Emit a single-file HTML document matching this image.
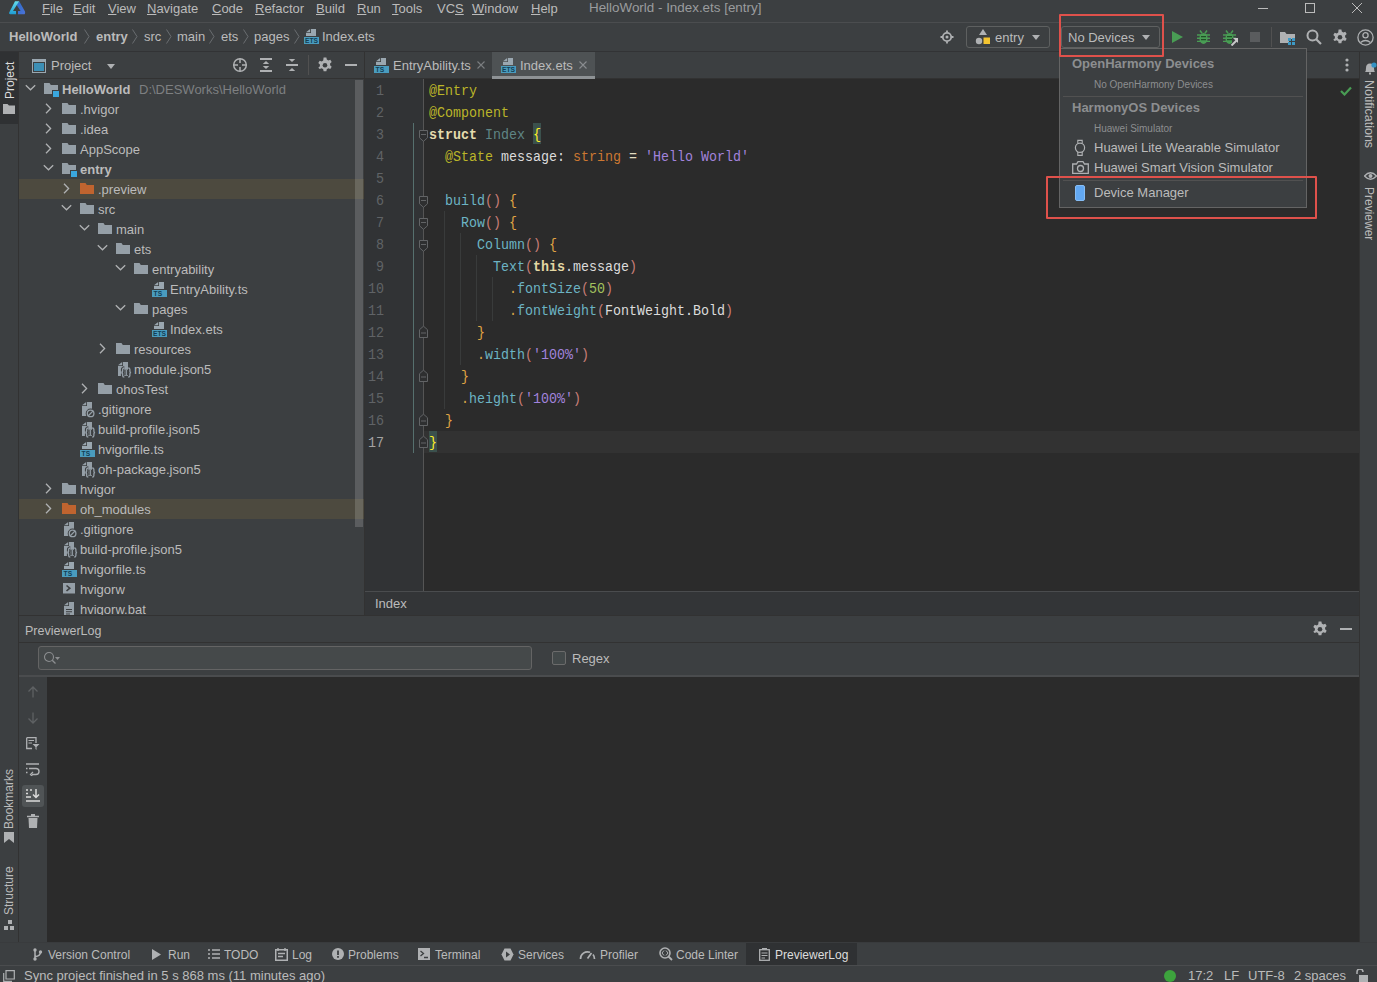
<!DOCTYPE html><html><head><meta charset="utf-8"><title>DevEco Studio</title><style>
*{margin:0;padding:0}
html,body{width:1377px;height:982px;overflow:hidden;background:#3C3F41}
body{position:relative;font-family:"Liberation Sans",sans-serif}
.b{position:absolute;display:block}
.t{position:absolute;white-space:nowrap;line-height:16px;font-family:"Liberation Sans",sans-serif}
.m{position:absolute;white-space:pre;line-height:22px;font-family:"Liberation Mono",monospace;font-size:13.33px;transform:scaleY(1.1);transform-origin:0 14px}
u{text-decoration:underline;text-underline-offset:1px}
</style></head><body><div class="b" style="left:0px;top:0px;width:1377px;height:982px;background:#3C3F41;"></div>
<div class="b" style="left:0px;top:22px;width:1377px;height:1px;background:#4B4D4F;"></div>
<div class="b" style="left:0px;top:51px;width:1377px;height:1px;background:#323335;"></div>
<svg class="b" style="left:8px;top:0px;" width="18" height="16" viewBox="0 0 18 16"><defs><linearGradient id="lgL" x1="0" y1="0" x2="0" y2="1"><stop offset="0" stop-color="#66DCEE"/><stop offset="1" stop-color="#1E9CD2"/></linearGradient><linearGradient id="lgR" x1="0" y1="0" x2="1" y2="1"><stop offset="0" stop-color="#2A6CC8"/><stop offset="1" stop-color="#4C72D8"/></linearGradient></defs><path d="M9.2 4 L11.2 1.2 L17 11.4 Q17.6 14.2 15.8 14.2 H10 V11 H12.6 L8.6 5 Z" fill="url(#lgR)"/><path d="M7 1.2 H11.2 L5 11 H8 V14.2 H2.4 Q0.5 14.2 1.2 12.4 Z" fill="url(#lgL)"/></svg>
<div class="t" style="left:42px;top:1px;font-size:13px;color:#BBBBBB;"><u>F</u>ile</div>
<div class="t" style="left:73px;top:1px;font-size:13px;color:#BBBBBB;"><u>E</u>dit</div>
<div class="t" style="left:108px;top:1px;font-size:13px;color:#BBBBBB;"><u>V</u>iew</div>
<div class="t" style="left:147px;top:1px;font-size:13px;color:#BBBBBB;"><u>N</u>avigate</div>
<div class="t" style="left:212px;top:1px;font-size:13px;color:#BBBBBB;"><u>C</u>ode</div>
<div class="t" style="left:255px;top:1px;font-size:13px;color:#BBBBBB;"><u>R</u>efactor</div>
<div class="t" style="left:316px;top:1px;font-size:13px;color:#BBBBBB;"><u>B</u>uild</div>
<div class="t" style="left:357px;top:1px;font-size:13px;color:#BBBBBB;"><u>R</u>un</div>
<div class="t" style="left:392px;top:1px;font-size:13px;color:#BBBBBB;"><u>T</u>ools</div>
<div class="t" style="left:437px;top:1px;font-size:13px;color:#BBBBBB;">VC<u>S</u></div>
<div class="t" style="left:472px;top:1px;font-size:13px;color:#BBBBBB;"><u>W</u>indow</div>
<div class="t" style="left:531px;top:1px;font-size:13px;color:#BBBBBB;"><u>H</u>elp</div>
<div class="t" style="left:589px;top:0px;font-size:13.4px;color:#9A9C9E;">HelloWorld - Index.ets [entry]</div>
<svg class="b" style="left:1258px;top:3px;" width="10" height="10" viewBox="0 0 10 10"><path d="M0 5.5 H10" stroke="#BBBBBB" stroke-width="1"/></svg>
<svg class="b" style="left:1305px;top:3px;" width="10" height="10" viewBox="0 0 10 10"><rect x="0.5" y="0.5" width="9" height="9" fill="none" stroke="#BBBBBB" stroke-width="1"/></svg>
<svg class="b" style="left:1352px;top:3px;" width="10" height="10" viewBox="0 0 10 10"><path d="M0 0 L10 10 M10 0 L0 10" stroke="#BBBBBB" stroke-width="1"/></svg>
<div class="t" style="left:9px;top:29px;font-size:13px;color:#BBBBBB;font-weight:bold;">HelloWorld</div>
<svg class="b" style="left:84px;top:29px;" width="6" height="15" viewBox="0 0 6 15"><path d="M0.5 0.5 L5 7.5 L0.5 14.5" fill="none" stroke="#6A6D70" stroke-width="1"/></svg>
<div class="t" style="left:96px;top:29px;font-size:13px;color:#BBBBBB;font-weight:bold;">entry</div>
<svg class="b" style="left:132px;top:29px;" width="6" height="15" viewBox="0 0 6 15"><path d="M0.5 0.5 L5 7.5 L0.5 14.5" fill="none" stroke="#6A6D70" stroke-width="1"/></svg>
<div class="t" style="left:144px;top:29px;font-size:13px;color:#BBBBBB;">src</div>
<svg class="b" style="left:166px;top:29px;" width="6" height="15" viewBox="0 0 6 15"><path d="M0.5 0.5 L5 7.5 L0.5 14.5" fill="none" stroke="#6A6D70" stroke-width="1"/></svg>
<div class="t" style="left:177px;top:29px;font-size:13px;color:#BBBBBB;">main</div>
<svg class="b" style="left:209px;top:29px;" width="6" height="15" viewBox="0 0 6 15"><path d="M0.5 0.5 L5 7.5 L0.5 14.5" fill="none" stroke="#6A6D70" stroke-width="1"/></svg>
<div class="t" style="left:221px;top:29px;font-size:13px;color:#BBBBBB;">ets</div>
<svg class="b" style="left:243px;top:29px;" width="6" height="15" viewBox="0 0 6 15"><path d="M0.5 0.5 L5 7.5 L0.5 14.5" fill="none" stroke="#6A6D70" stroke-width="1"/></svg>
<div class="t" style="left:254px;top:29px;font-size:13px;color:#BBBBBB;">pages</div>
<svg class="b" style="left:294px;top:29px;" width="6" height="15" viewBox="0 0 6 15"><path d="M0.5 0.5 L5 7.5 L0.5 14.5" fill="none" stroke="#6A6D70" stroke-width="1"/></svg>
<svg class="b" style="left:304px;top:29px;" width="16" height="16" viewBox="0 0 16 16"><path d="M7 0 H12 V7 H2 V4 H7 Z" fill="#9AA7B0"/><path d="M2 3.2 L6.2 0 V3.2 Z" fill="#9AA7B0"/><rect x="0" y="8" width="15" height="7" fill="#4A9CBE"/><text x="1" y="14.4" font-family="Liberation Sans" font-size="7.6" font-weight="bold" fill="#123E55" textLength="13" lengthAdjust="spacingAndGlyphs">ETS</text></svg>
<div class="t" style="left:322px;top:29px;font-size:13px;color:#BBBBBB;">Index.ets</div>
<svg class="b" style="left:940px;top:30px;" width="14" height="14" viewBox="0 0 14 14"><circle cx="7" cy="7" r="4.2" fill="none" stroke="#AFB1B3" stroke-width="1.8"/><circle cx="7" cy="7" r="1.5" fill="#AFB1B3"/><path d="M7 0.5 V2.5 M7 11.5 V13.5 M0.5 7 H2.5 M11.5 7 H13.5" stroke="#AFB1B3" stroke-width="1.8"/></svg>
<div class="b" style="left:966px;top:26px;width:84px;height:22px;border:1px solid #5E6060;border-radius:3px;box-sizing:border-box"></div>
<svg class="b" style="left:975px;top:29px;" width="16" height="16" viewBox="0 0 16 16"><path d="M8 0 L12 6 H4 Z" fill="#AFB1B3"/><circle cx="4" cy="12" r="3.2" fill="#AFB1B3"/><rect x="8.5" y="8.5" width="6.5" height="6.5" fill="#F4C430"/></svg>
<div class="t" style="left:995px;top:30px;font-size:13px;color:#BBBBBB;">entry</div>
<svg class="b" style="left:1032px;top:35px;" width="8" height="5" viewBox="0 0 8 5"><path d="M0 0 H8 L4 5 Z" fill="#AFB1B3"/></svg>
<div class="b" style="left:1061px;top:26px;width:99px;height:22px;border:1px solid #5E6060;border-radius:3px;box-sizing:border-box"></div>
<div class="t" style="left:1068px;top:30px;font-size:13px;color:#BBBBBB;">No Devices</div>
<svg class="b" style="left:1142px;top:35px;" width="8" height="5" viewBox="0 0 8 5"><path d="M0 0 H8 L4 5 Z" fill="#AFB1B3"/></svg>
<svg class="b" style="left:1172px;top:31px;" width="11" height="12" viewBox="0 0 11 12"><path d="M0 0 L11 6 L0 12 Z" fill="#499C54"/></svg>
<svg class="b" style="left:1197px;top:30px;" width="13" height="14" viewBox="0 0 13 14"><path d="M3 0.5 L5 3.2 M10 0.5 L8 3.2" stroke="#499C54" stroke-width="1.5"/><ellipse cx="6.5" cy="8.4" rx="4.1" ry="5.5" fill="#499C54"/><path d="M0 5 H13 M0 8.2 H13 M0 11.4 H13" stroke="#499C54" stroke-width="1.4"/><path d="M4 6.6 H9 M4 9.7 H9" stroke="#1F4F26" stroke-width="1.2"/></svg>
<svg class="b" style="left:1223px;top:30px;" width="16" height="16" viewBox="0 0 16 16"><path d="M3 0.5 L5 3.2 M10 0.5 L8 3.2" stroke="#499C54" stroke-width="1.5"/><ellipse cx="6.5" cy="8.4" rx="4.1" ry="5.5" fill="#499C54"/><path d="M0 5 H13 M0 8.2 H13 M0 11.4 H13" stroke="#499C54" stroke-width="1.4"/><path d="M4 6.6 H9 M4 9.7 H9" stroke="#1F4F26" stroke-width="1.2"/><path d="M9 8 H16 V16 H9 Z" fill="#3C3F41"/><path d="M8.5 15.5 L13.5 10.5" stroke="#C8C8C8" stroke-width="2"/><path d="M10 8 H15 V13 Z" fill="#C8C8C8"/></svg>
<div class="b" style="left:1250px;top:32px;width:10px;height:10px;background:#5A5C5E;"></div>
<div class="b" style="left:1271px;top:27px;width:1px;height:20px;background:#515151;"></div>
<svg class="b" style="left:1280px;top:29px;" width="16" height="16" viewBox="0 0 16 16"><path d="M0 3 H5 L6.5 5 H15 V10 H9 V14 H0 Z" fill="#AFB1B3"/><rect x="8" y="9" width="3" height="3" fill="#3D9AC6"/><rect x="12" y="9" width="3" height="3" fill="#3D9AC6"/><rect x="8" y="13" width="3" height="3" fill="#3D9AC6"/><rect x="12" y="13" width="3" height="3" fill="#3D9AC6"/></svg>
<svg class="b" style="left:1306px;top:29px;" width="16" height="16" viewBox="0 0 16 16"><circle cx="6.5" cy="6.5" r="5" fill="none" stroke="#AFB1B3" stroke-width="2"/><path d="M10 10 L15 15" stroke="#AFB1B3" stroke-width="2.2"/></svg>
<svg class="b" style="left:1332px;top:29px;" width="16" height="16" viewBox="0 0 16 16"><path fill="#AFB1B3" d="M6.6 0.5h2.8l0.4 2.1 1.5 0.9 2-0.8 1.4 2.4-1.6 1.4v1.8l1.6 1.4-1.4 2.4-2-0.8-1.5 0.9-0.4 2.1H6.6l-0.4-2.1-1.5-0.9-2 0.8L1.3 10.7l1.6-1.4V7.5L1.3 6.1 2.7 3.7l2 0.8 1.5-0.9z"/><circle cx="8" cy="8.2" r="2.3" fill="#3C3F41"/></svg>
<svg class="b" style="left:1357px;top:29px;" width="17" height="17" viewBox="0 0 17 17"><circle cx="8.5" cy="8.5" r="7.6" fill="none" stroke="#AFB1B3" stroke-width="1.3"/><circle cx="8.5" cy="6.3" r="2.6" fill="none" stroke="#AFB1B3" stroke-width="1.3"/><path d="M3.5 13.5 Q8.5 9.5 13.5 13.5" fill="none" stroke="#AFB1B3" stroke-width="1.3"/></svg>
<div class="b" style="left:0px;top:52px;width:18px;height:890px;background:#3C3F41;"></div>
<div class="b" style="left:18px;top:52px;width:1px;height:890px;background:#323232;"></div>
<div class="b" style="left:0px;top:52px;width:18px;height:72px;background:#2F3133;"></div>
<div class="t" style="left:1.5px;top:98.5px;font-size:12px;color:#DDDDDD;transform-origin:0 0;transform:rotate(-90deg)">Project</div>
<svg class="b" style="left:3px;top:104px;" width="12" height="10" viewBox="0 0 12 10"><path d="M0 0 H4.5 L6 1.6 H12 V10 H0 Z" fill="#AFB1B3"/></svg>
<div class="t" style="left:1px;top:829px;font-size:12px;color:#BBBBBB;transform-origin:0 0;transform:rotate(-90deg)">Bookmarks</div>
<svg class="b" style="left:4px;top:832px;" width="10" height="11" viewBox="0 0 10 11"><path d="M0 0 H10 V11 L5 7 L0 11 Z" fill="#AFB1B3"/></svg>
<div class="t" style="left:1px;top:915px;font-size:12px;color:#BBBBBB;transform-origin:0 0;transform:rotate(-90deg)">Structure</div>
<svg class="b" style="left:4px;top:920px;" width="10" height="10" viewBox="0 0 10 10"><rect x="4" y="0" width="4" height="4" fill="#AFB1B3"/><rect x="0" y="6" width="4" height="4" fill="#AFB1B3"/><rect x="6" y="6" width="4" height="4" fill="#AFB1B3"/></svg>
<div class="b" style="left:1359px;top:52px;width:1px;height:890px;background:#323232;"></div>
<div class="b" style="left:1360px;top:52px;width:17px;height:890px;background:#3C3F41;"></div>
<svg class="b" style="left:1364px;top:62px;" width="13" height="13" viewBox="0 0 13 13"><path d="M1 10 Q2 9 2 6 Q2 1.5 6 1.5 Q10 1.5 10 6 Q10 9 11 10 Z" fill="#AFB1B3"/><rect x="5" y="10.5" width="2" height="2" fill="#AFB1B3"/><circle cx="10" cy="3" r="2.6" fill="#3592C4"/></svg>
<div class="t" style="left:1376.5px;top:80px;font-size:12.5px;color:#BBBBBB;transform-origin:0 0;transform:rotate(90deg)">Notifications</div>
<svg class="b" style="left:1364px;top:171px;" width="13" height="10" viewBox="0 0 13 10"><path d="M0.5 5 Q6.5 -1.5 12.5 5 Q6.5 11.5 0.5 5 Z" fill="none" stroke="#AFB1B3" stroke-width="1.3"/><circle cx="6.5" cy="5" r="2" fill="#AFB1B3"/></svg>
<div class="t" style="left:1376.5px;top:187px;font-size:12px;color:#BBBBBB;transform-origin:0 0;transform:rotate(90deg)">Previewer</div>
<div class="b" style="left:19px;top:52px;width:345px;height:26px;background:#3C3F41;"></div>
<svg class="b" style="left:32px;top:59px;" width="14" height="14" viewBox="0 0 14 14"><rect x="0.5" y="0.5" width="13" height="13" fill="none" stroke="#9AA7B0" stroke-width="1"/><rect x="0" y="0" width="14" height="3" fill="#9AA7B0"/><rect x="2" y="4" width="10" height="8" fill="#3D8FB5"/></svg>
<div class="t" style="left:51px;top:58px;font-size:13px;color:#BBBBBB;">Project</div>
<svg class="b" style="left:107px;top:64px;" width="8" height="5" viewBox="0 0 8 5"><path d="M0 0 H8 L4 5 Z" fill="#AFB1B3"/></svg>
<div class="b" style="left:19px;top:78px;width:345px;height:1px;background:#323232;"></div>
<svg class="b" style="left:232px;top:57px;" width="16" height="16" viewBox="0 0 16 16"><circle cx="8" cy="8" r="6.3" fill="none" stroke="#AFB1B3" stroke-width="1.5"/><path d="M8 1.5 V6 M8 10 V14.5 M1.5 8 H6 M10 8 H14.5" stroke="#AFB1B3" stroke-width="1.5"/></svg>
<svg class="b" style="left:260px;top:58px;" width="12" height="14" viewBox="0 0 12 14"><rect x="0" y="0" width="12" height="2" fill="#AFB1B3"/><path d="M2.8 6 L6 3 L9.2 6 Z M2.8 8 L6 11 L9.2 8 Z" fill="#AFB1B3"/><rect x="0" y="12" width="12" height="2" fill="#AFB1B3"/></svg>
<svg class="b" style="left:286px;top:58px;" width="12" height="14" viewBox="0 0 12 14"><path d="M2.8 1 H9.2 L6 4 Z M2.8 13 H9.2 L6 10 Z" fill="#AFB1B3"/><rect x="0" y="6" width="12" height="2" fill="#AFB1B3"/></svg>
<div class="b" style="left:308px;top:55px;width:1px;height:20px;background:#515151;"></div>
<svg class="b" style="left:317px;top:57px;" width="16" height="16" viewBox="0 0 16 16"><path fill="#AFB1B3" d="M6.6 0.5h2.8l0.4 2.1 1.5 0.9 2-0.8 1.4 2.4-1.6 1.4v1.8l1.6 1.4-1.4 2.4-2-0.8-1.5 0.9-0.4 2.1H6.6l-0.4-2.1-1.5-0.9-2 0.8L1.3 10.7l1.6-1.4V7.5L1.3 6.1 2.7 3.7l2 0.8 1.5-0.9z"/><circle cx="8" cy="8.2" r="2.3" fill="#3C3F41"/></svg>
<div class="b" style="left:345px;top:64px;width:12px;height:2px;background:#AFB1B3;"></div>
<div class="b" style="left:19px;top:79px;width:345px;height:536px;background:#3C3F41;"></div>
<div class="b" style="left:19px;top:79px;width:345px;height:536px;overflow:hidden">
<svg class="b" style="left:6px;top:5px" width="11" height="8" viewBox="0 0 11 8"><path d="M0.8 1.2 L5.5 5.8 L10.2 1.2" fill="none" stroke="#AFB1B3" stroke-width="1.3"/></svg><svg class="b" style="left:25px;top:4px" width="16" height="15" viewBox="0 0 16 15"><path d="M0 0 H5.5 L6.8 2 H14 V11 H0 Z" fill="#959FA7"/><rect x="8" y="7" width="8" height="8" fill="#3C3F41"/><rect x="9" y="8" width="6" height="6" fill="#3AA7DE"/></svg><div class="t" style="left:43px;top:3px;font-size:13px;color:#BBBBBB;font-weight:bold;">HelloWorld</div><div class="t" style="left:120px;top:3px;font-size:13px;color:#7E8082">D:\DESWorks\HelloWorld</div><svg class="b" style="left:26px;top:24px" width="7" height="11" viewBox="0 0 7 11"><path d="M1 0.8 L5.6 5.5 L1 10.2" fill="none" stroke="#AFB1B3" stroke-width="1.3"/></svg><svg class="b" style="left:43px;top:24px" width="16" height="15" viewBox="0 0 16 15"><path d="M0 0 H5.5 L6.8 2 H14 V11 H0 Z" fill="#959FA7"/></svg><div class="t" style="left:61px;top:23px;font-size:13px;color:#BBBBBB;">.hvigor</div><svg class="b" style="left:26px;top:44px" width="7" height="11" viewBox="0 0 7 11"><path d="M1 0.8 L5.6 5.5 L1 10.2" fill="none" stroke="#AFB1B3" stroke-width="1.3"/></svg><svg class="b" style="left:43px;top:44px" width="16" height="15" viewBox="0 0 16 15"><path d="M0 0 H5.5 L6.8 2 H14 V11 H0 Z" fill="#959FA7"/></svg><div class="t" style="left:61px;top:43px;font-size:13px;color:#BBBBBB;">.idea</div><svg class="b" style="left:26px;top:64px" width="7" height="11" viewBox="0 0 7 11"><path d="M1 0.8 L5.6 5.5 L1 10.2" fill="none" stroke="#AFB1B3" stroke-width="1.3"/></svg><svg class="b" style="left:43px;top:64px" width="16" height="15" viewBox="0 0 16 15"><path d="M0 0 H5.5 L6.8 2 H14 V11 H0 Z" fill="#959FA7"/></svg><div class="t" style="left:61px;top:63px;font-size:13px;color:#BBBBBB;">AppScope</div><svg class="b" style="left:24px;top:85px" width="11" height="8" viewBox="0 0 11 8"><path d="M0.8 1.2 L5.5 5.8 L10.2 1.2" fill="none" stroke="#AFB1B3" stroke-width="1.3"/></svg><svg class="b" style="left:43px;top:84px" width="16" height="15" viewBox="0 0 16 15"><path d="M0 0 H5.5 L6.8 2 H14 V11 H0 Z" fill="#959FA7"/><rect x="8" y="7" width="8" height="8" fill="#3C3F41"/><rect x="9" y="8" width="6" height="6" fill="#3AA7DE"/></svg><div class="t" style="left:61px;top:83px;font-size:13px;color:#BBBBBB;font-weight:bold;">entry</div><div class="b" style="left:0;top:100px;width:345px;height:20px;background:#4D4A3F"></div><svg class="b" style="left:44px;top:104px" width="7" height="11" viewBox="0 0 7 11"><path d="M1 0.8 L5.6 5.5 L1 10.2" fill="none" stroke="#AFB1B3" stroke-width="1.3"/></svg><svg class="b" style="left:61px;top:104px" width="16" height="15" viewBox="0 0 16 15"><path d="M0 0 H5.5 L6.8 2 H14 V11 H0 Z" fill="#C0642F"/></svg><div class="t" style="left:79px;top:103px;font-size:13px;color:#BBBBBB;">.preview</div><svg class="b" style="left:42px;top:125px" width="11" height="8" viewBox="0 0 11 8"><path d="M0.8 1.2 L5.5 5.8 L10.2 1.2" fill="none" stroke="#AFB1B3" stroke-width="1.3"/></svg><svg class="b" style="left:61px;top:124px" width="16" height="15" viewBox="0 0 16 15"><path d="M0 0 H5.5 L6.8 2 H14 V11 H0 Z" fill="#959FA7"/></svg><div class="t" style="left:79px;top:123px;font-size:13px;color:#BBBBBB;">src</div><svg class="b" style="left:60px;top:145px" width="11" height="8" viewBox="0 0 11 8"><path d="M0.8 1.2 L5.5 5.8 L10.2 1.2" fill="none" stroke="#AFB1B3" stroke-width="1.3"/></svg><svg class="b" style="left:79px;top:144px" width="16" height="15" viewBox="0 0 16 15"><path d="M0 0 H5.5 L6.8 2 H14 V11 H0 Z" fill="#959FA7"/></svg><div class="t" style="left:97px;top:143px;font-size:13px;color:#BBBBBB;">main</div><svg class="b" style="left:78px;top:165px" width="11" height="8" viewBox="0 0 11 8"><path d="M0.8 1.2 L5.5 5.8 L10.2 1.2" fill="none" stroke="#AFB1B3" stroke-width="1.3"/></svg><svg class="b" style="left:97px;top:164px" width="16" height="15" viewBox="0 0 16 15"><path d="M0 0 H5.5 L6.8 2 H14 V11 H0 Z" fill="#959FA7"/></svg><div class="t" style="left:115px;top:163px;font-size:13px;color:#BBBBBB;">ets</div><svg class="b" style="left:96px;top:185px" width="11" height="8" viewBox="0 0 11 8"><path d="M0.8 1.2 L5.5 5.8 L10.2 1.2" fill="none" stroke="#AFB1B3" stroke-width="1.3"/></svg><svg class="b" style="left:115px;top:184px" width="16" height="15" viewBox="0 0 16 15"><path d="M0 0 H5.5 L6.8 2 H14 V11 H0 Z" fill="#959FA7"/></svg><div class="t" style="left:133px;top:183px;font-size:13px;color:#BBBBBB;">entryability</div><svg class="b" style="left:133px;top:203px" width="16" height="16" viewBox="0 0 16 16"><path d="M7 0 H12 V7 H2 V4 H7 Z" fill="#9AA7B0"/><path d="M2 3.2 L6.2 0 V3.2 Z" fill="#9AA7B0"/><rect x="0" y="8" width="15" height="7" fill="#4A9CBE"/><text x="1.6" y="14.4" font-family="Liberation Sans" font-size="7.6" font-weight="bold" fill="#123E55" textLength="8.5" lengthAdjust="spacingAndGlyphs">TS</text></svg><div class="t" style="left:151px;top:203px;font-size:13px;color:#BBBBBB;">EntryAbility.ts</div><svg class="b" style="left:96px;top:225px" width="11" height="8" viewBox="0 0 11 8"><path d="M0.8 1.2 L5.5 5.8 L10.2 1.2" fill="none" stroke="#AFB1B3" stroke-width="1.3"/></svg><svg class="b" style="left:115px;top:224px" width="16" height="15" viewBox="0 0 16 15"><path d="M0 0 H5.5 L6.8 2 H14 V11 H0 Z" fill="#959FA7"/></svg><div class="t" style="left:133px;top:223px;font-size:13px;color:#BBBBBB;">pages</div><svg class="b" style="left:133px;top:243px" width="16" height="16" viewBox="0 0 16 16"><path d="M7 0 H12 V7 H2 V4 H7 Z" fill="#9AA7B0"/><path d="M2 3.2 L6.2 0 V3.2 Z" fill="#9AA7B0"/><rect x="0" y="8" width="15" height="7" fill="#4A9CBE"/><text x="1" y="14.4" font-family="Liberation Sans" font-size="7.6" font-weight="bold" fill="#123E55" textLength="13" lengthAdjust="spacingAndGlyphs">ETS</text></svg><div class="t" style="left:151px;top:243px;font-size:13px;color:#BBBBBB;">Index.ets</div><svg class="b" style="left:80px;top:264px" width="7" height="11" viewBox="0 0 7 11"><path d="M1 0.8 L5.6 5.5 L1 10.2" fill="none" stroke="#AFB1B3" stroke-width="1.3"/></svg><svg class="b" style="left:97px;top:264px" width="16" height="15" viewBox="0 0 16 15"><path d="M0 0 H5.5 L6.8 2 H14 V11 H0 Z" fill="#959FA7"/></svg><div class="t" style="left:115px;top:263px;font-size:13px;color:#BBBBBB;">resources</div><svg class="b" style="left:99px;top:283px" width="15" height="17" viewBox="0 0 15 17"><path d="M5 0 H10 V14 H0 V4 H5 Z" fill="#959FA7"/><path d="M0 3.2 L4.2 0 V3.2 Z" fill="#959FA7"/><path d="M6.3 6 Q4.6 6 4.6 7.6 V9.4 Q4.6 10.5 3.4 10.5 Q4.6 10.5 4.6 11.6 V13.4 Q4.6 15 6.3 15 M10.2 6 Q11.9 6 11.9 7.6 V9.4 Q11.9 10.5 13.1 10.5 Q11.9 10.5 11.9 11.6 V13.4 Q11.9 15 10.2 15 M8.25 7.8 V13.2" fill="none" stroke="#3C3F41" stroke-width="3.4"/><path d="M6.3 6 Q4.6 6 4.6 7.6 V9.4 Q4.6 10.5 3.4 10.5 Q4.6 10.5 4.6 11.6 V13.4 Q4.6 15 6.3 15 M10.2 6 Q11.9 6 11.9 7.6 V9.4 Q11.9 10.5 13.1 10.5 Q11.9 10.5 11.9 11.6 V13.4 Q11.9 15 10.2 15 M8.25 7.8 V13.2" fill="none" stroke="#959FA7" stroke-width="1.3"/></svg><div class="t" style="left:115px;top:283px;font-size:13px;color:#BBBBBB;">module.json5</div><svg class="b" style="left:62px;top:304px" width="7" height="11" viewBox="0 0 7 11"><path d="M1 0.8 L5.6 5.5 L1 10.2" fill="none" stroke="#AFB1B3" stroke-width="1.3"/></svg><svg class="b" style="left:79px;top:304px" width="16" height="15" viewBox="0 0 16 15"><path d="M0 0 H5.5 L6.8 2 H14 V11 H0 Z" fill="#959FA7"/></svg><div class="t" style="left:97px;top:303px;font-size:13px;color:#BBBBBB;">ohosTest</div><svg class="b" style="left:63px;top:323px" width="14" height="17" viewBox="0 0 14 17"><path d="M5 0 H10 V14 H0 V4 H5 Z" fill="#959FA7"/><path d="M0 3.2 L4.2 0 V3.2 Z" fill="#959FA7"/><circle cx="8.6" cy="11.4" r="4.9" fill="#3C3F41"/><circle cx="8.6" cy="11.4" r="3.3" fill="none" stroke="#959FA7" stroke-width="1.3"/><path d="M6.3 13.7 L10.9 9.1" stroke="#959FA7" stroke-width="1.3"/></svg><div class="t" style="left:79px;top:323px;font-size:13px;color:#BBBBBB;">.gitignore</div><svg class="b" style="left:63px;top:343px" width="15" height="17" viewBox="0 0 15 17"><path d="M5 0 H10 V14 H0 V4 H5 Z" fill="#959FA7"/><path d="M0 3.2 L4.2 0 V3.2 Z" fill="#959FA7"/><path d="M6.3 6 Q4.6 6 4.6 7.6 V9.4 Q4.6 10.5 3.4 10.5 Q4.6 10.5 4.6 11.6 V13.4 Q4.6 15 6.3 15 M10.2 6 Q11.9 6 11.9 7.6 V9.4 Q11.9 10.5 13.1 10.5 Q11.9 10.5 11.9 11.6 V13.4 Q11.9 15 10.2 15 M8.25 7.8 V13.2" fill="none" stroke="#3C3F41" stroke-width="3.4"/><path d="M6.3 6 Q4.6 6 4.6 7.6 V9.4 Q4.6 10.5 3.4 10.5 Q4.6 10.5 4.6 11.6 V13.4 Q4.6 15 6.3 15 M10.2 6 Q11.9 6 11.9 7.6 V9.4 Q11.9 10.5 13.1 10.5 Q11.9 10.5 11.9 11.6 V13.4 Q11.9 15 10.2 15 M8.25 7.8 V13.2" fill="none" stroke="#959FA7" stroke-width="1.3"/></svg><div class="t" style="left:79px;top:343px;font-size:13px;color:#BBBBBB;">build-profile.json5</div><svg class="b" style="left:61px;top:363px" width="16" height="16" viewBox="0 0 16 16"><path d="M7 0 H12 V7 H2 V4 H7 Z" fill="#9AA7B0"/><path d="M2 3.2 L6.2 0 V3.2 Z" fill="#9AA7B0"/><rect x="0" y="8" width="15" height="7" fill="#4A9CBE"/><text x="1.6" y="14.4" font-family="Liberation Sans" font-size="7.6" font-weight="bold" fill="#123E55" textLength="8.5" lengthAdjust="spacingAndGlyphs">TS</text></svg><div class="t" style="left:79px;top:363px;font-size:13px;color:#BBBBBB;">hvigorfile.ts</div><svg class="b" style="left:63px;top:383px" width="15" height="17" viewBox="0 0 15 17"><path d="M5 0 H10 V14 H0 V4 H5 Z" fill="#959FA7"/><path d="M0 3.2 L4.2 0 V3.2 Z" fill="#959FA7"/><path d="M6.3 6 Q4.6 6 4.6 7.6 V9.4 Q4.6 10.5 3.4 10.5 Q4.6 10.5 4.6 11.6 V13.4 Q4.6 15 6.3 15 M10.2 6 Q11.9 6 11.9 7.6 V9.4 Q11.9 10.5 13.1 10.5 Q11.9 10.5 11.9 11.6 V13.4 Q11.9 15 10.2 15 M8.25 7.8 V13.2" fill="none" stroke="#3C3F41" stroke-width="3.4"/><path d="M6.3 6 Q4.6 6 4.6 7.6 V9.4 Q4.6 10.5 3.4 10.5 Q4.6 10.5 4.6 11.6 V13.4 Q4.6 15 6.3 15 M10.2 6 Q11.9 6 11.9 7.6 V9.4 Q11.9 10.5 13.1 10.5 Q11.9 10.5 11.9 11.6 V13.4 Q11.9 15 10.2 15 M8.25 7.8 V13.2" fill="none" stroke="#959FA7" stroke-width="1.3"/></svg><div class="t" style="left:79px;top:383px;font-size:13px;color:#BBBBBB;">oh-package.json5</div><svg class="b" style="left:26px;top:404px" width="7" height="11" viewBox="0 0 7 11"><path d="M1 0.8 L5.6 5.5 L1 10.2" fill="none" stroke="#AFB1B3" stroke-width="1.3"/></svg><svg class="b" style="left:43px;top:404px" width="16" height="15" viewBox="0 0 16 15"><path d="M0 0 H5.5 L6.8 2 H14 V11 H0 Z" fill="#959FA7"/></svg><div class="t" style="left:61px;top:403px;font-size:13px;color:#BBBBBB;">hvigor</div><div class="b" style="left:0;top:420px;width:345px;height:20px;background:#4D4A3F"></div><svg class="b" style="left:26px;top:424px" width="7" height="11" viewBox="0 0 7 11"><path d="M1 0.8 L5.6 5.5 L1 10.2" fill="none" stroke="#AFB1B3" stroke-width="1.3"/></svg><svg class="b" style="left:43px;top:424px" width="16" height="15" viewBox="0 0 16 15"><path d="M0 0 H5.5 L6.8 2 H14 V11 H0 Z" fill="#C0642F"/></svg><div class="t" style="left:61px;top:423px;font-size:13px;color:#BBBBBB;">oh_modules</div><svg class="b" style="left:45px;top:443px" width="14" height="17" viewBox="0 0 14 17"><path d="M5 0 H10 V14 H0 V4 H5 Z" fill="#959FA7"/><path d="M0 3.2 L4.2 0 V3.2 Z" fill="#959FA7"/><circle cx="8.6" cy="11.4" r="4.9" fill="#3C3F41"/><circle cx="8.6" cy="11.4" r="3.3" fill="none" stroke="#959FA7" stroke-width="1.3"/><path d="M6.3 13.7 L10.9 9.1" stroke="#959FA7" stroke-width="1.3"/></svg><div class="t" style="left:61px;top:443px;font-size:13px;color:#BBBBBB;">.gitignore</div><svg class="b" style="left:45px;top:463px" width="15" height="17" viewBox="0 0 15 17"><path d="M5 0 H10 V14 H0 V4 H5 Z" fill="#959FA7"/><path d="M0 3.2 L4.2 0 V3.2 Z" fill="#959FA7"/><path d="M6.3 6 Q4.6 6 4.6 7.6 V9.4 Q4.6 10.5 3.4 10.5 Q4.6 10.5 4.6 11.6 V13.4 Q4.6 15 6.3 15 M10.2 6 Q11.9 6 11.9 7.6 V9.4 Q11.9 10.5 13.1 10.5 Q11.9 10.5 11.9 11.6 V13.4 Q11.9 15 10.2 15 M8.25 7.8 V13.2" fill="none" stroke="#3C3F41" stroke-width="3.4"/><path d="M6.3 6 Q4.6 6 4.6 7.6 V9.4 Q4.6 10.5 3.4 10.5 Q4.6 10.5 4.6 11.6 V13.4 Q4.6 15 6.3 15 M10.2 6 Q11.9 6 11.9 7.6 V9.4 Q11.9 10.5 13.1 10.5 Q11.9 10.5 11.9 11.6 V13.4 Q11.9 15 10.2 15 M8.25 7.8 V13.2" fill="none" stroke="#959FA7" stroke-width="1.3"/></svg><div class="t" style="left:61px;top:463px;font-size:13px;color:#BBBBBB;">build-profile.json5</div><svg class="b" style="left:43px;top:483px" width="16" height="16" viewBox="0 0 16 16"><path d="M7 0 H12 V7 H2 V4 H7 Z" fill="#9AA7B0"/><path d="M2 3.2 L6.2 0 V3.2 Z" fill="#9AA7B0"/><rect x="0" y="8" width="15" height="7" fill="#4A9CBE"/><text x="1.6" y="14.4" font-family="Liberation Sans" font-size="7.6" font-weight="bold" fill="#123E55" textLength="8.5" lengthAdjust="spacingAndGlyphs">TS</text></svg><div class="t" style="left:61px;top:483px;font-size:13px;color:#BBBBBB;">hvigorfile.ts</div><svg class="b" style="left:44px;top:504px" width="12" height="11" viewBox="0 0 12 11"><rect x="0" y="0" width="12" height="10.5" fill="#959FA7"/><path d="M3.5 2.5 L6.8 5.2 L3.5 8" fill="none" stroke="#3C3F41" stroke-width="1.6"/></svg><div class="t" style="left:61px;top:503px;font-size:13px;color:#BBBBBB;">hvigorw</div><svg class="b" style="left:45px;top:523px" width="11" height="17" viewBox="0 0 11 17"><path d="M5 0 H10 V14 H0 V4 H5 Z" fill="#959FA7"/><path d="M0 3.2 L4.2 0 V3.2 Z" fill="#959FA7"/><path d="M2 7.5 H8 M2 9.8 H8 M2 12 H6" stroke="#3C3F41" stroke-width="1.1"/></svg><div class="t" style="left:61px;top:523px;font-size:13px;color:#BBBBBB;">hvigorw.bat</div>
</div>
<div class="b" style="left:355px;top:80px;width:8px;height:447px;background:rgba(255,255,255,0.16);"></div>
<div class="b" style="left:364px;top:52px;width:1px;height:563px;background:#323232;"></div>
<div class="b" style="left:365px;top:52px;width:994px;height:26px;background:#3C3F41;"></div>
<div class="b" style="left:365px;top:78px;width:994px;height:1px;background:#323232;"></div>
<svg class="b" style="left:374px;top:58px;" width="16" height="16" viewBox="0 0 16 16"><path d="M7 0 H12 V7 H2 V4 H7 Z" fill="#9AA7B0"/><path d="M2 3.2 L6.2 0 V3.2 Z" fill="#9AA7B0"/><rect x="0" y="8" width="15" height="7" fill="#4A9CBE"/><text x="1.6" y="14.4" font-family="Liberation Sans" font-size="7.6" font-weight="bold" fill="#123E55" textLength="8.5" lengthAdjust="spacingAndGlyphs">TS</text></svg>
<div class="t" style="left:393px;top:58px;font-size:13px;color:#BBBBBB;">EntryAbility.ts</div>
<svg class="b" style="left:477px;top:61px;" width="8" height="8" viewBox="0 0 8 8"><path d="M0.5 0.5 L7.5 7.5 M7.5 0.5 L0.5 7.5" stroke="#7B7E80" stroke-width="1.1"/></svg>
<div class="b" style="left:492px;top:52px;width:103px;height:26px;background:#4E5254;"></div>
<div class="b" style="left:492px;top:76px;width:103px;height:3px;background:#8E9295;"></div>
<svg class="b" style="left:501px;top:58px;" width="16" height="16" viewBox="0 0 16 16"><path d="M7 0 H12 V7 H2 V4 H7 Z" fill="#9AA7B0"/><path d="M2 3.2 L6.2 0 V3.2 Z" fill="#9AA7B0"/><rect x="0" y="8" width="15" height="7" fill="#4A9CBE"/><text x="1" y="14.4" font-family="Liberation Sans" font-size="7.6" font-weight="bold" fill="#123E55" textLength="13" lengthAdjust="spacingAndGlyphs">ETS</text></svg>
<div class="t" style="left:520px;top:58px;font-size:13px;color:#BBBBBB;">Index.ets</div>
<svg class="b" style="left:579px;top:61px;" width="8" height="8" viewBox="0 0 8 8"><path d="M0.5 0.5 L7.5 7.5 M7.5 0.5 L0.5 7.5" stroke="#8A8D90" stroke-width="1.1"/></svg>
<svg class="b" style="left:1345px;top:58px;" width="4" height="14" viewBox="0 0 4 14"><circle cx="2" cy="2" r="1.6" fill="#AFB1B3"/><circle cx="2" cy="7" r="1.6" fill="#AFB1B3"/><circle cx="2" cy="12" r="1.6" fill="#AFB1B3"/></svg>
<div class="b" style="left:365px;top:79px;width:58px;height:512px;background:#313335;"></div>
<div class="b" style="left:423px;top:79px;width:936px;height:512px;background:#2B2B2B;"></div>
<div class="b" style="left:423px;top:431px;width:936px;height:22px;background:#323232;"></div>
<div class="b" style="left:533px;top:123px;width:8px;height:21px;background:#3B514D;"></div>
<div class="b" style="left:429px;top:431px;width:8px;height:21px;background:#3B514D;"></div>
<svg class="b" style="left:1340px;top:86px;" width="12" height="10" viewBox="0 0 12 10"><path d="M1 5 L4.5 8.5 L11 1.5" fill="none" stroke="#499C54" stroke-width="2.2"/></svg>
<div class="m" style="left:376px;top:81px;color:#606366;font-size:13.33px">1</div>
<div class="m" style="left:429px;top:81px"><span style="color:#BBB529">@Entry</span></div>
<div class="m" style="left:376px;top:103px;color:#606366;font-size:13.33px">2</div>
<div class="m" style="left:429px;top:103px"><span style="color:#BBB529">@Component</span></div>
<div class="m" style="left:376px;top:125px;color:#606366;font-size:13.33px">3</div>
<div class="m" style="left:429px;top:125px"><span style="color:#E6DCAE;font-weight:bold">struct</span><span style=""> </span><span style="color:#5F8585">Index</span><span style=""> </span><span style="color:#FFEF28">{</span></div>
<div class="m" style="left:376px;top:147px;color:#606366;font-size:13.33px">4</div>
<div class="m" style="left:429px;top:147px"><span style="">  </span><span style="color:#BBB529">@State</span><span style="color:#DCDCDC"> message: </span><span style="color:#CC7832">string</span><span style="color:#E0DCC0"> = </span><span style="color:#A283DC">&#x27;Hello World&#x27;</span></div>
<div class="m" style="left:376px;top:169px;color:#606366;font-size:13.33px">5</div>
<div class="m" style="left:429px;top:169px"></div>
<div class="m" style="left:376px;top:191px;color:#606366;font-size:13.33px">6</div>
<div class="m" style="left:429px;top:191px"><span style="">  </span><span style="color:#6CB4C4">build</span><span style="color:#C87E78">()</span><span style=""> </span><span style="color:#E1A544">{</span></div>
<div class="m" style="left:376px;top:213px;color:#606366;font-size:13.33px">7</div>
<div class="m" style="left:429px;top:213px"><span style="">    </span><span style="color:#6CB4C4">Row</span><span style="color:#C87E78">()</span><span style=""> </span><span style="color:#E1A544">{</span></div>
<div class="m" style="left:376px;top:235px;color:#606366;font-size:13.33px">8</div>
<div class="m" style="left:429px;top:235px"><span style="">      </span><span style="color:#6CB4C4">Column</span><span style="color:#C87E78">()</span><span style=""> </span><span style="color:#E1A544">{</span></div>
<div class="m" style="left:376px;top:257px;color:#606366;font-size:13.33px">9</div>
<div class="m" style="left:429px;top:257px"><span style="">        </span><span style="color:#6CB4C4">Text</span><span style="color:#C87E78">(</span><span style="color:#E3D7A3;font-weight:bold">this</span><span style="color:#DCDCDC">.message</span><span style="color:#C87E78">)</span></div>
<div class="m" style="left:368px;top:279px;color:#606366;font-size:13.33px">10</div>
<div class="m" style="left:429px;top:279px"><span style="">          </span><span style="color:#D7A448">.</span><span style="color:#6CB4C4">fontSize</span><span style="color:#C87E78">(</span><span style="color:#A3C25E">50</span><span style="color:#C87E78">)</span></div>
<div class="m" style="left:368px;top:301px;color:#606366;font-size:13.33px">11</div>
<div class="m" style="left:429px;top:301px"><span style="">          </span><span style="color:#D7A448">.</span><span style="color:#6CB4C4">fontWeight</span><span style="color:#C87E78">(</span><span style="color:#DCDCDC">FontWeight.Bold</span><span style="color:#C87E78">)</span></div>
<div class="m" style="left:368px;top:323px;color:#606366;font-size:13.33px">12</div>
<div class="m" style="left:429px;top:323px"><span style="">      </span><span style="color:#E1A544">}</span></div>
<div class="m" style="left:368px;top:345px;color:#606366;font-size:13.33px">13</div>
<div class="m" style="left:429px;top:345px"><span style="">      </span><span style="color:#D7A448">.</span><span style="color:#6CB4C4">width</span><span style="color:#C87E78">(</span><span style="color:#A283DC">&#x27;100%&#x27;</span><span style="color:#C87E78">)</span></div>
<div class="m" style="left:368px;top:367px;color:#606366;font-size:13.33px">14</div>
<div class="m" style="left:429px;top:367px"><span style="">    </span><span style="color:#E1A544">}</span></div>
<div class="m" style="left:368px;top:389px;color:#606366;font-size:13.33px">15</div>
<div class="m" style="left:429px;top:389px"><span style="">    </span><span style="color:#D7A448">.</span><span style="color:#6CB4C4">height</span><span style="color:#C87E78">(</span><span style="color:#A283DC">&#x27;100%&#x27;</span><span style="color:#C87E78">)</span></div>
<div class="m" style="left:368px;top:411px;color:#606366;font-size:13.33px">16</div>
<div class="m" style="left:429px;top:411px"><span style="">  </span><span style="color:#E1A544">}</span></div>
<div class="m" style="left:368px;top:433px;color:#A4A3A3;font-size:13.33px">17</div>
<div class="m" style="left:429px;top:433px"><span style="color:#FFEF28">}</span></div>
<div class="b" style="left:423px;top:79px;width:1px;height:512px;background:#555555;"></div>
<svg class="b" style="left:419px;top:130px;" width="9" height="12" viewBox="0 0 9 12"><path d="M0.5 0.5 H8.5 V7.8 L4.5 11.3 L0.5 7.8 Z" fill="#2E2F30" stroke="#626466" stroke-width="1"/><path d="M2 4.5 H7" stroke="#626466" stroke-width="1"/></svg>
<svg class="b" style="left:419px;top:196px;" width="9" height="12" viewBox="0 0 9 12"><path d="M0.5 0.5 H8.5 V7.8 L4.5 11.3 L0.5 7.8 Z" fill="#2E2F30" stroke="#626466" stroke-width="1"/><path d="M2 4.5 H7" stroke="#626466" stroke-width="1"/></svg>
<svg class="b" style="left:419px;top:218px;" width="9" height="12" viewBox="0 0 9 12"><path d="M0.5 0.5 H8.5 V7.8 L4.5 11.3 L0.5 7.8 Z" fill="#2E2F30" stroke="#626466" stroke-width="1"/><path d="M2 4.5 H7" stroke="#626466" stroke-width="1"/></svg>
<svg class="b" style="left:419px;top:240px;" width="9" height="12" viewBox="0 0 9 12"><path d="M0.5 0.5 H8.5 V7.8 L4.5 11.3 L0.5 7.8 Z" fill="#2E2F30" stroke="#626466" stroke-width="1"/><path d="M2 4.5 H7" stroke="#626466" stroke-width="1"/></svg>
<svg class="b" style="left:419px;top:325px;" width="9" height="13" viewBox="0 0 9 13"><path d="M0.5 12.5 H8.5 V4.7 L4.5 1.2 L0.5 4.7 Z" fill="#2E2F30" stroke="#626466" stroke-width="1"/><path d="M2 8 H7" stroke="#626466" stroke-width="1"/></svg>
<svg class="b" style="left:419px;top:369px;" width="9" height="13" viewBox="0 0 9 13"><path d="M0.5 12.5 H8.5 V4.7 L4.5 1.2 L0.5 4.7 Z" fill="#2E2F30" stroke="#626466" stroke-width="1"/><path d="M2 8 H7" stroke="#626466" stroke-width="1"/></svg>
<svg class="b" style="left:419px;top:413px;" width="9" height="13" viewBox="0 0 9 13"><path d="M0.5 12.5 H8.5 V4.7 L4.5 1.2 L0.5 4.7 Z" fill="#2E2F30" stroke="#626466" stroke-width="1"/><path d="M2 8 H7" stroke="#626466" stroke-width="1"/></svg>
<svg class="b" style="left:419px;top:435px;" width="9" height="13" viewBox="0 0 9 13"><path d="M0.5 12.5 H8.5 V4.7 L4.5 1.2 L0.5 4.7 Z" fill="#2E2F30" stroke="#626466" stroke-width="1"/><path d="M2 8 H7" stroke="#626466" stroke-width="1"/></svg>
<div class="b" style="left:413px;top:123px;width:1px;height:330px;background:#56706E;"></div>
<div class="b" style="left:444px;top:211px;width:1px;height:198px;background:#393B3B;"></div>
<div class="b" style="left:460px;top:233px;width:1px;height:132px;background:#393B3B;"></div>
<div class="b" style="left:476px;top:255px;width:1px;height:66px;background:#393B3B;"></div>
<div class="b" style="left:492px;top:277px;width:1px;height:44px;background:#393B3B;"></div>
<div class="b" style="left:365px;top:591px;width:994px;height:1px;background:#4A4C4E;"></div>
<div class="b" style="left:365px;top:592px;width:994px;height:23px;background:#333537;"></div>
<div class="t" style="left:375px;top:596px;font-size:13px;color:#BBBBBB;">Index</div>
<div class="b" style="left:19px;top:615px;width:1340px;height:1px;background:#323232;"></div>
<div class="b" style="left:19px;top:616px;width:1340px;height:26px;background:#3C3F41;"></div>
<div class="t" style="left:25px;top:623px;font-size:12.5px;color:#BBBBBB;">PreviewerLog</div>
<svg class="b" style="left:1312px;top:621px;" width="16" height="16" viewBox="0 0 16 16"><path fill="#AFB1B3" d="M6.6 0.5h2.8l0.4 2.1 1.5 0.9 2-0.8 1.4 2.4-1.6 1.4v1.8l1.6 1.4-1.4 2.4-2-0.8-1.5 0.9-0.4 2.1H6.6l-0.4-2.1-1.5-0.9-2 0.8L1.3 10.7l1.6-1.4V7.5L1.3 6.1 2.7 3.7l2 0.8 1.5-0.9z"/><circle cx="8" cy="8.2" r="2.3" fill="#3C3F41"/></svg>
<div class="b" style="left:1340px;top:628px;width:12px;height:2px;background:#AFB1B3;"></div>
<div class="b" style="left:19px;top:642px;width:1340px;height:1px;background:#323232;"></div>
<div class="b" style="left:19px;top:643px;width:1340px;height:33px;background:#3C3F41;"></div>
<div class="b" style="left:38px;top:646px;width:494px;height:24px;background:#45494A;border:1px solid #646464;border-radius:3px;box-sizing:border-box"></div>
<svg class="b" style="left:43px;top:651px;" width="18" height="14" viewBox="0 0 18 14"><circle cx="6" cy="6" r="4.5" fill="none" stroke="#8C8E90" stroke-width="1.1"/><path d="M9.2 9.2 L12.5 12.5" stroke="#8C8E90" stroke-width="1.3"/><path d="M12 6 H17 L14.5 9 Z" fill="#8C8E90"/></svg>
<div class="b" style="left:552px;top:651px;width:14px;height:14px;border:1px solid #6B6B6B;border-radius:2px;box-sizing:border-box;background:#43494A"></div>
<div class="t" style="left:572px;top:651px;font-size:13px;color:#BBBBBB;">Regex</div>
<div class="b" style="left:19px;top:675px;width:1340px;height:2px;background:#4A4C4E;"></div>
<div class="b" style="left:19px;top:677px;width:28px;height:265px;background:#3C3F41;"></div>
<div class="b" style="left:47px;top:677px;width:1312px;height:265px;background:#2B2B2B;"></div>
<svg class="b" style="left:27px;top:686px;" width="12" height="12" viewBox="0 0 12 12"><path d="M6 1 V11.5 M1.5 5.5 L6 1 L10.5 5.5" fill="none" stroke="#5E6163" stroke-width="1.3"/></svg>
<svg class="b" style="left:27px;top:712px;" width="12" height="12" viewBox="0 0 12 12"><path d="M6 0.5 V11 M1.5 6.5 L6 11 L10.5 6.5" fill="none" stroke="#5E6163" stroke-width="1.3"/></svg>
<svg class="b" style="left:26px;top:737px;" width="14" height="13" viewBox="0 0 14 13"><path d="M0.7 0.7 H10 V6 M0.7 0.7 V11.5 H6" fill="none" stroke="#AFB1B3" stroke-width="1.3"/><path d="M2.5 3.5 H8 M2.5 6 H6" stroke="#AFB1B3" stroke-width="1.2"/><path d="M6.5 7 H13.5 L10.5 10 V13 L9.5 12 V10 Z" fill="#AFB1B3"/></svg>
<svg class="b" style="left:26px;top:763px;" width="14" height="13" viewBox="0 0 14 13"><path d="M0 1 H13 M3 5.5 H10 Q13 5.5 13 8.5 Q13 11.5 10 11.5 H6" fill="none" stroke="#AFB1B3" stroke-width="1.4"/><path d="M0 5.5 H1.5 M0 9.5 H1.5" stroke="#AFB1B3" stroke-width="1.4"/><path d="M7 9 L4.5 11.5 L7 14" fill="none" stroke="#AFB1B3" stroke-width="1.3"/></svg>
<div class="b" style="left:22px;top:785px;width:22px;height:22px;background:#505456;border-radius:3px"></div>
<svg class="b" style="left:26px;top:788px;" width="14" height="14" viewBox="0 0 14 14"><path d="M0 2 H2 M0 5.5 H2 M0 9 H5 M0 13 H14 M4 2 H6" stroke="#DADADA" stroke-width="1.4"/><path d="M10 1 V9.5 M7 6.5 L10 9.5 L13 6.5" fill="none" stroke="#DADADA" stroke-width="1.5"/></svg>
<svg class="b" style="left:27px;top:814px;" width="12" height="14" viewBox="0 0 12 14"><path d="M0 2.5 H12" stroke="#AFB1B3" stroke-width="1.5"/><rect x="4" y="0" width="4" height="2" fill="#AFB1B3"/><path d="M1.5 4 H10.5 L10 14 H2 Z" fill="#AFB1B3"/></svg>
<div class="b" style="left:0px;top:943px;width:1377px;height:22px;background:#3C3F41;"></div>
<div class="b" style="left:0px;top:942px;width:1377px;height:1px;background:#393B3D;"></div>
<div class="b" style="left:746px;top:943px;width:111px;height:22px;background:#2F3133;"></div>
<div class="t" style="left:48px;top:947px;font-size:12px;color:#BBBBBB;">Version Control</div>
<div class="t" style="left:168px;top:947px;font-size:12px;color:#BBBBBB;">Run</div>
<div class="t" style="left:224px;top:947px;font-size:12px;color:#BBBBBB;">TODO</div>
<div class="t" style="left:292px;top:947px;font-size:12px;color:#BBBBBB;">Log</div>
<div class="t" style="left:348px;top:947px;font-size:12px;color:#BBBBBB;">Problems</div>
<div class="t" style="left:435px;top:947px;font-size:12px;color:#BBBBBB;">Terminal</div>
<div class="t" style="left:518px;top:947px;font-size:12px;color:#BBBBBB;">Services</div>
<div class="t" style="left:600px;top:947px;font-size:12px;color:#BBBBBB;">Profiler</div>
<div class="t" style="left:676px;top:947px;font-size:12px;color:#BBBBBB;">Code Linter</div>
<div class="t" style="left:775px;top:947px;font-size:12px;color:#DDDDDD;">PreviewerLog</div>
<svg class="b" style="left:33px;top:948px;" width="10" height="13" viewBox="0 0 10 13"><circle cx="2" cy="2" r="1.7" fill="#AFB1B3"/><circle cx="7.5" cy="4" r="1.7" fill="#AFB1B3"/><circle cx="2" cy="11" r="1.7" fill="#AFB1B3"/><path d="M2 2 V11 M7.5 4 Q7.5 8 2 8.8" fill="none" stroke="#AFB1B3" stroke-width="1.5"/></svg>
<svg class="b" style="left:152px;top:949px;" width="9" height="11" viewBox="0 0 9 11"><path d="M0 0 L9 5.5 L0 11 Z" fill="#AFB1B3"/></svg>
<svg class="b" style="left:208px;top:949px;" width="12" height="10" viewBox="0 0 12 10"><path d="M0 1 H2 M0 5 H2 M0 9 H2 M4 1 H12 M4 5 H12 M4 9 H12" stroke="#AFB1B3" stroke-width="1.5"/></svg>
<svg class="b" style="left:275px;top:948px;" width="13" height="13" viewBox="0 0 13 13"><rect x="0.75" y="1.75" width="11.5" height="10.5" fill="none" stroke="#AFB1B3" stroke-width="1.5"/><path d="M3 0 V3 M10 0 V3 M3 5.5 H10 M3 8.5 H8" stroke="#AFB1B3" stroke-width="1.4"/></svg>
<svg class="b" style="left:332px;top:948px;" width="12" height="12" viewBox="0 0 12 12"><circle cx="6" cy="6" r="6" fill="#AFB1B3"/><rect x="5.1" y="2.5" width="1.8" height="4.5" fill="#3C3F41"/><rect x="5.1" y="8" width="1.8" height="1.8" fill="#3C3F41"/></svg>
<svg class="b" style="left:418px;top:948px;" width="12" height="12" viewBox="0 0 12 12"><rect x="0" y="0" width="12" height="12" fill="#AFB1B3"/><path d="M2.5 3 L5.5 5.5 L2.5 8 M6 9.5 H10" fill="none" stroke="#3C3F41" stroke-width="1.3"/></svg>
<svg class="b" style="left:501px;top:948px;" width="13" height="13" viewBox="0 0 13 13"><path d="M3.5 0.5 H9.5 L12.5 6.5 L9.5 12.5 H3.5 L0.5 6.5 Z" fill="#AFB1B3"/><path d="M5 3.5 L9 6.5 L5 9.5 Z" fill="#3C3F41"/></svg>
<svg class="b" style="left:579px;top:948px;" width="17" height="12" viewBox="0 0 17 12"><path d="M1.5 11 A7 7 0 0 1 11 4.3" fill="none" stroke="#AFB1B3" stroke-width="1.7"/><path d="M14 6.5 A7 7 0 0 1 15.5 11" fill="none" stroke="#AFB1B3" stroke-width="1.7"/><path d="M8.5 10.5 L12.5 5" stroke="#AFB1B3" stroke-width="1.7"/></svg>
<svg class="b" style="left:659px;top:947px;" width="14" height="14" viewBox="0 0 14 14"><circle cx="6" cy="6" r="5" fill="none" stroke="#AFB1B3" stroke-width="1.6"/><path d="M9.5 9.5 L13 13" stroke="#AFB1B3" stroke-width="1.8"/><path d="M5 3.5 L3 6 L5 8.5 M7 3.5 L9 6 L7 8.5" fill="none" stroke="#AFB1B3" stroke-width="1"/></svg>
<svg class="b" style="left:759px;top:948px;" width="11" height="13" viewBox="0 0 11 13"><rect x="0.7" y="1.7" width="9.6" height="10.6" fill="none" stroke="#AFB1B3" stroke-width="1.3"/><path d="M3 0.5 H8 M2.5 5 H8.5 M2.5 7.5 H8.5 M2.5 10 H6" stroke="#AFB1B3" stroke-width="1.1"/></svg>
<div class="b" style="left:0px;top:965px;width:1377px;height:1px;background:#4A4C4E;"></div>
<div class="b" style="left:0px;top:966px;width:1377px;height:16px;background:#3C3F41;"></div>
<svg class="b" style="left:3px;top:970px;" width="12" height="12" viewBox="0 0 12 12"><path d="M3 0.7 H11.3 V9 H3 Z" fill="none" stroke="#AFB1B3" stroke-width="1.2"/><path d="M0.7 3 V11.3 H9" fill="none" stroke="#AFB1B3" stroke-width="1.2"/></svg>
<div class="t" style="left:24px;top:968px;font-size:13px;color:#BBBBBB;">Sync project finished in 5 s 868 ms (11 minutes ago)</div>
<div class="b" style="left:1164px;top:970px;width:12px;height:12px;border-radius:6px;background:#3DA33D"></div>
<div class="t" style="left:1188px;top:968px;font-size:13px;color:#BBBBBB;">17:2</div>
<div class="t" style="left:1224px;top:968px;font-size:13px;color:#BBBBBB;">LF</div>
<div class="t" style="left:1248px;top:968px;font-size:13px;color:#BBBBBB;">UTF-8</div>
<div class="t" style="left:1294px;top:968px;font-size:13px;color:#BBBBBB;">2 spaces</div>
<svg class="b" style="left:1355px;top:969px;" width="13" height="14" viewBox="0 0 13 14"><path d="M2 5 V3 A3 3 0 0 1 8 3" fill="none" stroke="#AFB1B3" stroke-width="1.5"/><rect x="4" y="6" width="9" height="8" fill="#AFB1B3"/></svg>
<div class="b" style="left:1059px;top:48px;width:248px;height:160px;background:#3C3F41;border:1px solid #646464;box-sizing:border-box"></div>
<div class="t" style="left:1072px;top:56px;font-size:13px;color:#8C8E90;font-weight:bold;">OpenHarmony Devices</div>
<div class="t" style="left:1094px;top:77px;font-size:10px;color:#8C8E90;">No OpenHarmony Devices</div>
<div class="b" style="left:1063px;top:96px;width:240px;height:1px;background:#515151;"></div>
<div class="t" style="left:1072px;top:100px;font-size:13px;color:#8C8E90;font-weight:bold;">HarmonyOS Devices</div>
<div class="t" style="left:1094px;top:121px;font-size:10px;color:#8C8E90;">Huawei Simulator</div>
<svg class="b" style="left:1074px;top:139px;" width="12" height="18" viewBox="0 0 12 18"><circle cx="6" cy="8.8" r="4.6" fill="none" stroke="#AFB1B3" stroke-width="1.2"/><path d="M3.8 4.6 V1.4 H8.2 V4.6 M3.8 13 V16.4 H8.2 V13" fill="none" stroke="#AFB1B3" stroke-width="1.1"/></svg>
<div class="t" style="left:1094px;top:140px;font-size:13px;color:#BBBBBB;">Huawei Lite Wearable Simulator</div>
<svg class="b" style="left:1072px;top:161px;" width="17" height="13" viewBox="0 0 17 13"><path d="M0.7 3 H4.5 L6 0.7 H11 L12.5 3 H16.3 V12.3 H0.7 Z" fill="none" stroke="#AFB1B3" stroke-width="1.3"/><circle cx="8.5" cy="7.5" r="3" fill="none" stroke="#AFB1B3" stroke-width="1.3"/></svg>
<div class="t" style="left:1094px;top:160px;font-size:13px;color:#BBBBBB;">Huawei Smart Vision Simulator</div>
<div class="b" style="left:1063px;top:180px;width:240px;height:1px;background:#515151;"></div>
<div class="b" style="left:1075px;top:185px;width:10px;height:16px;background:#62A8F2;border:1px solid #86BDF5;box-sizing:border-box;border-radius:2px"></div>
<div class="t" style="left:1094px;top:185px;font-size:13px;color:#BBBBBB;">Device Manager</div>
<div class="b" style="left:1059px;top:14px;width:105px;height:43px;border:2px solid #DF514B;border-radius:1px;box-sizing:border-box"></div>
<div class="b" style="left:1046px;top:176px;width:271px;height:43px;border:2px solid #DF514B;border-radius:1px;box-sizing:border-box"></div></body></html>
